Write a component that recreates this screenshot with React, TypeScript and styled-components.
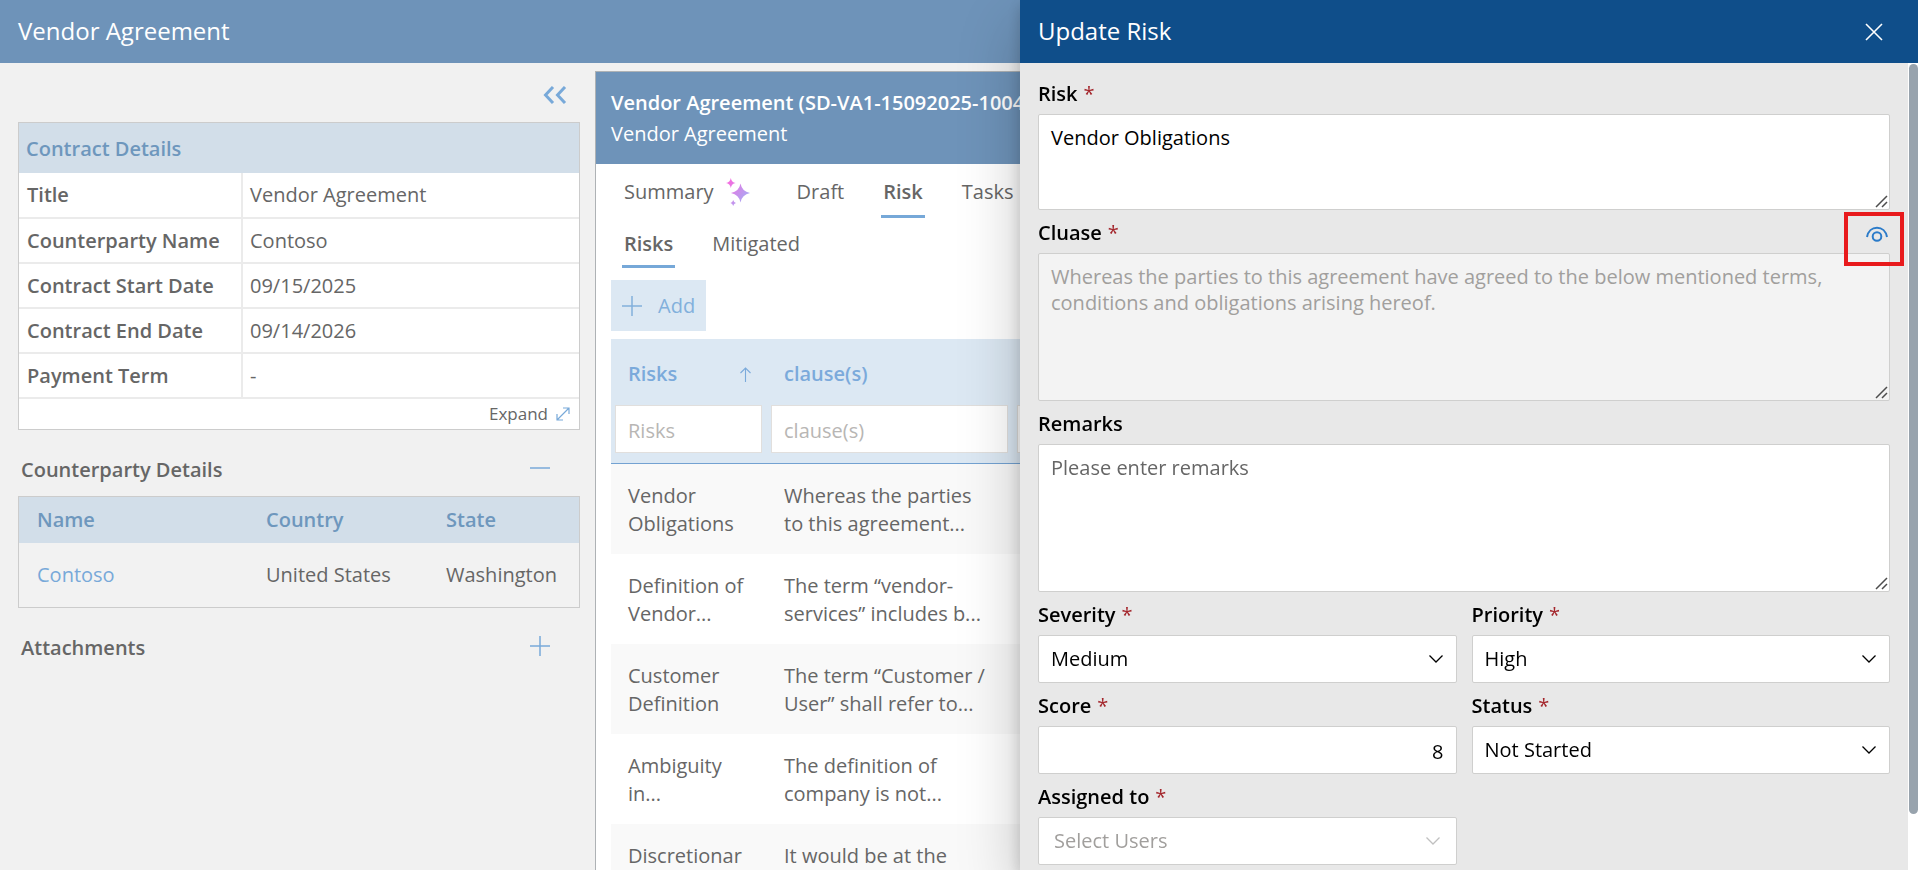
import React from "react";
import styled, { createGlobalStyle, css } from "styled-components";

const GlobalStyle = createGlobalStyle`
  *, *::before, *::after { box-sizing: border-box; }
  body {
    margin: 0;
    font-family: "Open Sans", "Noto Sans", sans-serif;
    font-size: 20px;
    line-height: 28px;
    color: #666;
    background: #f1f1f1;
  }
  button, input, select, textarea { font: inherit; }
  h1, h2, h3, p { margin: 0; font-size: inherit; font-weight: inherit; }
`;

const Page = styled.div`
  display: flex;
  flex-direction: column;
  height: 100vh;
  overflow: hidden;
`;

const TopBar = styled.header`
  flex: 0 0 63px;
  display: flex;
  align-items: center;
  padding: 0 18px 2px;
  background: #6e93b9;
  color: #fff;
  font-size: 24px;
`;

const Content = styled.div`
  flex: 1;
  min-height: 0;
  display: grid;
  grid-template-columns: 595px minmax(0, 1fr);
`;

const Sidebar = styled.aside`
  padding: 0 15px 0 18px;
`;

const IconButton = styled.button<{ $color?: string }>`
  display: flex;
  align-items: center;
  justify-content: center;
  padding: 0;
  border: 0;
  background: none;
  color: ${(p) => p.$color ?? "#78a9d9"};
  cursor: pointer;
`;

const SidebarTools = styled.div`
  display: flex;
  justify-content: flex-end;
  align-items: center;
  height: 59px;
  padding: 4px 13px 0 0;
`;

const Card = styled.section<{ $plain?: boolean }>`
  border: 1px solid #ccc;
  background: ${(p) => (p.$plain ? "#f2f2f2" : "#fff")};
`;

const CardTitle = styled.h2`
  height: 50px;
  padding: 2px 7px 0;
  display: flex;
  align-items: center;
  background: #d2dee9;
  color: #6e97bd;
  font-weight: 600;
`;

const DetailsTable = styled.table`
  width: 100%;
  border-collapse: collapse;
  table-layout: fixed;

  th,
  td {
    height: 45px;
    padding: 0 7px;
    text-align: left;
    border-bottom: 2px solid #ebebeb;
  }
  th {
    width: 223px;
    padding-left: 8px;
    font-weight: 600;
    border-right: 2px solid #ebebeb;
  }
`;

const CardFooter = styled.div`
  display: flex;
  justify-content: flex-end;
  align-items: center;
  height: 30px;
  padding: 0 9px;
`;

const ExpandButton = styled.button`
  display: flex;
  align-items: center;
  gap: 8px;
  padding: 0;
  border: 0;
  background: none;
  color: #666;
  font-size: 17px;
  cursor: pointer;
`;

const SectionRow = styled.div`
  display: flex;
  justify-content: space-between;
  align-items: center;
  height: 66px;
  padding: 14px 30px 0 3px;
  font-weight: 600;

  button {
    padding-bottom: 4px;
  }
`;

const PartyTable = styled.table`
  width: 100%;
  border-collapse: collapse;
  table-layout: fixed;

  th,
  td {
    padding: 0 0 0 18px;
    text-align: left;
    white-space: nowrap;
  }
  th {
    height: 46px;
    background: #d2dee9;
    color: #6e97bd;
    font-weight: 600;
  }
  td {
    height: 64px;
  }
  th:nth-child(1) {
    width: 229px;
  }
  th:nth-child(2) {
    width: 180px;
  }
`;

const PartyLink = styled.a`
  color: #78a9d9;
  text-decoration: none;
`;

const Panel = styled.main`
  margin-top: 8px;
  min-width: 0;
  border: 1px solid #aeb2b5;
  border-bottom: 0;
  background: #fff;
  overflow: hidden;
`;

const PanelHead = styled.div`
  height: 92px;
  padding: 15px;
  background: #6e93b9;
  color: #fff;
  line-height: 31px;
  white-space: nowrap;
`;

const Strong = styled.h2`
  font-weight: 600;
`;

const PanelBody = styled.div`
  padding: 0 15px;
`;

const TabRow = styled.div<{ $first?: boolean }>`
  display: flex;
  gap: 35px;
  height: ${(p) => (p.$first ? "54px" : "50px")};
  padding-left: 11px;
`;

const Tab = styled.button<{ $active?: boolean }>`
  display: flex;
  align-items: center;
  gap: 12px;
  height: 100%;
  padding: 5px 2px 0;
  border: 0;
  background: none;
  color: #666;
  cursor: pointer;
  border-bottom: 3px solid ${(p) => (p.$active ? "#76a8d8" : "transparent")};
  font-weight: ${(p) => (p.$active ? 600 : 400)};

  svg {
    margin-right: 8px;
  }
`;

const AddButton = styled.button`
  display: flex;
  align-items: center;
  gap: 16px;
  height: 51px;
  margin: 12px 0 8px;
  padding: 0 11px;
  border: 0;
  background: #dce8f3;
  color: #82b0dc;
  cursor: pointer;
`;

const RiskTable = styled.table`
  width: 100%;
  border-collapse: collapse;
  table-layout: fixed;

  col:nth-child(1) {
    width: 156px;
  }
  col:nth-child(2) {
    width: 246px;
  }
  thead {
    background: #dce8f3;
    border-bottom: 1px solid #73a2d2;
  }
  thead th {
    padding: 0;
    text-align: left;
    color: #7baadb;
    font-weight: 600;
  }
  tbody td {
    height: 90px;
    padding: 3px 0 0 17px;
    white-space: pre-line;
  }
  tbody tr:nth-child(odd) {
    background: #f9f9f9;
  }
`;

const ColumnHead = styled.div`
  display: flex;
  justify-content: space-between;
  align-items: center;
  height: 66px;
  padding: 4px 16px 0 17px;
`;

const FilterCell = styled.td`
  height: 58px;
  padding: 0 5px 10px 4px;
`;

const FilterInput = styled.input`
  display: block;
  width: 100%;
  height: 48px;
  padding: 2px 12px 0;
  border: 1px solid #e1dfdd;
  background: #fff;
  &::placeholder {
    color: #b8b6b4;
    opacity: 1;
  }
`;

const Drawer = styled.section`
  position: fixed;
  inset: 0 0 0 auto;
  width: 898px;
  max-width: 100%;
  display: flex;
  flex-direction: column;
  background: #e8e8e8;
  color: #000;
  box-shadow: 0 26px 58px rgba(0, 0, 0, 0.22), 0 5px 14px rgba(0, 0, 0, 0.18);
`;

const DrawerHead = styled.header`
  flex: 0 0 63px;
  display: flex;
  align-items: center;
  justify-content: space-between;
  padding: 0 35px 0 18px;
  background: #0f4e8a;
  color: #fff;
  font-size: 24px;

  h2 {
    padding-bottom: 2px;
  }
`;

const DrawerBody = styled.div`
  flex: 1;
  min-height: 0;
  display: flex;
`;

const Form = styled.form`
  flex: 1;
  min-width: 0;
  padding: 8px 18px;
  overflow: hidden auto;
  scrollbar-width: none;
`;

const ScrollTrack = styled.div`
  flex: 0 0 10px;
  padding: 1px 0 0 1px;
  background: #fff;
`;

const ScrollThumb = styled.div`
  height: 93%;
  border-radius: 5px;
  background: #98a3ad;
`;

const FieldGrid = styled.div`
  display: grid;
  grid-template-columns: 1fr 1fr;
  column-gap: 15px;
`;

const Field = styled.div<{ $wide?: boolean }>`
  min-width: 0;
  ${(p) => p.$wide && "grid-column: 1 / -1;"}
`;

const LabelRow = styled.div`
  position: relative;
  display: flex;
  justify-content: space-between;
  align-items: center;
  height: 43px;
  padding: 3px 2px 0 0;
`;

const Label = styled.label`
  font-weight: 600;
`;

const Required = styled.span`
  margin-left: 6px;
  color: #a4262c;
  font-weight: 400;
`;

const Highlight = styled.span`
  position: absolute;
  z-index: 1;
  top: 2px;
  right: -14px;
  width: 60px;
  height: 54px;
  border: 4px solid #e81a1c;
  pointer-events: none;
`;

const control = css`
  display: block;
  width: 100%;
  border: 1px solid #cfcfce;
  border-radius: 2px;
  background: #fff;
  color: #000;
`;

const TextAreaWrap = styled.div`
  display: grid;

  > * {
    grid-area: 1 / 1;
  }
  svg {
    place-self: end;
    margin: 0 2px 2px 0;
    pointer-events: none;
  }
`;

const TextArea = styled.textarea<{ $short?: boolean }>`
  ${control}
  height: ${(p) => (p.$short ? "96px" : "148px")};
  padding: 10px 12px;
  line-height: 26px;
  resize: vertical;
  &::-webkit-resizer {
    background: transparent;
  }
  &::placeholder {
    color: #666;
    opacity: 1;
  }
  &:disabled {
    background: #f3f3f3;
    color: #a19f9d;
  }
`;

const NumberInput = styled.input`
  ${control}
  height: 48px;
  padding: 2px 12px 0;
  text-align: right;
`;

const SelectWrap = styled.div<{ $muted?: boolean }>`
  display: grid;
  align-items: center;
  color: ${(p) => (p.$muted ? "#c0c0c0" : "#000")};

  > * {
    grid-area: 1 / 1;
  }
  svg {
    justify-self: end;
    margin-right: ${(p) => (p.$muted ? "16px" : "14px")};
    pointer-events: none;
  }
`;

const Select = styled.select<{ $muted?: boolean }>`
  ${control}
  height: 48px;
  padding: 0 ${(p) => (p.$muted ? "15px" : "12px")};
  appearance: none;
  ${(p) => p.$muted && "color: #a19f9d;"}
`;

const CollapseIcon = () => (
  <svg width="24" height="18" viewBox="0 0 24 18" fill="none" stroke="currentColor" strokeWidth="3">
    <path d="M10 1 2.500 9l7.500 8M22 1 14.500 9l7.500 8" />
  </svg>
);

const ExpandIcon = () => (
  <svg width="14" height="14" viewBox="0 0 14 14" fill="none" stroke="#78a9d9" strokeWidth="1.2">
    <path d="M1 13 13 1M7 1h6v6M1 7v6h6" />
  </svg>
);

const PlusIcon = ({ minus }: { minus?: boolean }) => (
  <svg width="20" height="20" viewBox="0 0 20 20" fill="none" stroke="currentColor" strokeWidth="1.5">
    <path d={minus ? "M0 10h20" : "M0 10h20M10 0v20"} />
  </svg>
);

const SparkleIcon = () => (
  <svg width="24" height="28" viewBox="0 0 24 28">
    <defs>
      <linearGradient id="sparkle" gradientUnits="userSpaceOnUse" x1="2" y1="4" x2="24" y2="20">
        <stop offset="0" stopColor="#f56be0" />
        <stop offset="1" stopColor="#a3aef5" />
      </linearGradient>
    </defs>
    <g fill="url(#sparkle)">
      <path d="M14.5 5.500Q16 13.500 24 15 16 16.500 14.500 24.500 13 16.500 5 15 13 13.500 14.500 5.500Z" />
      <path d="M4.800 0Q5.600 4.400 9.600 5 5.600 5.600 4.800 10 4 5.600 0 5 4 4.400 4.800 0Z" />
      <path d="M7.200 22Q7.800 24.500 10 25 7.800 25.500 7.200 28 6.600 25.500 4.500 25 6.600 24.500 7.200 22Z" />
    </g>
  </svg>
);

const SortIcon = () => (
  <svg width="11" height="15" viewBox="0 0 11 15" fill="none" stroke="currentColor" strokeWidth="1.100">
    <path d="M5.500 15V1M.5 6l5-5 5 5" />
  </svg>
);

const CloseIcon = () => (
  <svg width="18" height="18" viewBox="0 0 18 18" fill="none" stroke="currentColor" strokeWidth="1.600">
    <path d="m1 1 16 16M17 1 1 17" />
  </svg>
);

const EyeIcon = () => (
  <svg width="22" height="18" viewBox="0 0 22 18" fill="none" stroke="currentColor" strokeWidth="2">
    <path d="M1 13C2 7.300 6 3.700 11 3.700S20 7.300 21 13" />
    <circle cx="11" cy="12.500" r="4.300" />
  </svg>
);

const GripIcon = () => (
  <svg width="13" height="13" viewBox="0 0 13 13" fill="none" stroke="#4d4d4d" strokeWidth="1.500">
    <path d="M1 12 12 1M7 12l5-5" />
  </svg>
);

const ChevronIcon = ({ size = 14 }: { size?: number }) => (
  <svg width={size} height="8" viewBox="0 0 14 8" fill="none" stroke="currentColor" strokeWidth="1.300">
    <path d="m.5.500 6.500 6.500 6.500-6.500" />
  </svg>
);

const details: [string, string][] = [
  ["Title", "Vendor Agreement"],
  ["Counterparty Name", "Contoso"],
  ["Contract Start Date", "09/15/2025"],
  ["Contract End Date", "09/14/2026"],
  ["Payment Term", "-"],
];

const risks: [string, string][] = [
  ["Vendor\nObligations", "Whereas the parties\nto this agreement..."],
  ["Definition of\nVendor...", "The term “vendor-\nservices” includes b..."],
  ["Customer\nDefinition", "The term “Customer /\nUser” shall refer to..."],
  ["Ambiguity\nin...", "The definition of\ncompany is not..."],
  ["Discretionar\ny Power", "It would be at the\nsole discretion..."],
];

interface FieldLabelProps {
  htmlFor: string;
  text: string;
  required?: boolean;
  children?: React.ReactNode;
}

const FieldLabel = ({ htmlFor, text, required, children }: FieldLabelProps) => (
  <LabelRow>
    <Label htmlFor={htmlFor}>
      {text}
      {required && <Required>*</Required>}
    </Label>
    {children}
  </LabelRow>
);

interface SelectFieldProps {
  id: string;
  label: string;
  options: string[];
  muted?: boolean;
}

const SelectField = ({ id, label, options, muted }: SelectFieldProps) => (
  <Field>
    <FieldLabel htmlFor={id} text={label} required />
    <SelectWrap $muted={muted}>
      <Select id={id} $muted={muted}>
        {options.map((o) => (
          <option key={o}>{o}</option>
        ))}
      </Select>
      <ChevronIcon size={muted ? 16 : 14} />
    </SelectWrap>
  </Field>
);

export default function App() {
  return (
    <Page>
      <GlobalStyle />
      <TopBar>
        <h1>Vendor Agreement</h1>
      </TopBar>
      <Content>
        <Sidebar>
          <SidebarTools>
            <IconButton aria-label="Collapse panel">
              <CollapseIcon />
            </IconButton>
          </SidebarTools>
          <Card>
            <CardTitle>Contract Details</CardTitle>
            <DetailsTable>
              <tbody>
                {details.map(([name, value]) => (
                  <tr key={name}>
                    <th scope="row">{name}</th>
                    <td>{value}</td>
                  </tr>
                ))}
              </tbody>
            </DetailsTable>
            <CardFooter>
              <ExpandButton>
                Expand <ExpandIcon />
              </ExpandButton>
            </CardFooter>
          </Card>
          <SectionRow>
            <h2>Counterparty Details</h2>
            <IconButton aria-label="Hide counterparty details">
              <PlusIcon minus />
            </IconButton>
          </SectionRow>
          <Card $plain>
            <PartyTable>
              <thead>
                <tr>
                  <th>Name</th>
                  <th>Country</th>
                  <th>State</th>
                </tr>
              </thead>
              <tbody>
                <tr>
                  <td>
                    <PartyLink href="#contoso">Contoso</PartyLink>
                  </td>
                  <td>United States</td>
                  <td>Washington</td>
                </tr>
              </tbody>
            </PartyTable>
          </Card>
          <SectionRow>
            <h2>Attachments</h2>
            <IconButton aria-label="Show attachments">
              <PlusIcon />
            </IconButton>
          </SectionRow>
        </Sidebar>
        <Panel>
          <PanelHead>
            <Strong>Vendor Agreement (SD-VA1-15092025-1004)</Strong>
            <p>Vendor Agreement</p>
          </PanelHead>
          <PanelBody>
            <TabRow $first>
              <Tab>
                Summary <SparkleIcon />
              </Tab>
              <Tab>Draft</Tab>
              <Tab $active>Risk</Tab>
              <Tab>Tasks</Tab>
            </TabRow>
            <TabRow>
              <Tab $active>Risks</Tab>
              <Tab>Mitigated</Tab>
            </TabRow>
            <AddButton>
              <PlusIcon />
              Add
            </AddButton>
            <RiskTable>
              <colgroup>
                <col />
                <col />
                <col />
              </colgroup>
              <thead>
                <tr>
                  <th>
                    <ColumnHead>
                      Risks <SortIcon />
                    </ColumnHead>
                  </th>
                  <th>
                    <ColumnHead>clause(s)</ColumnHead>
                  </th>
                  <th />
                </tr>
                <tr>
                  <FilterCell>
                    <FilterInput placeholder="Risks" aria-label="Filter risks" />
                  </FilterCell>
                  <FilterCell>
                    <FilterInput placeholder="clause(s)" aria-label="Filter clauses" />
                  </FilterCell>
                  <FilterCell>
                    <FilterInput aria-label="Filter remarks" />
                  </FilterCell>
                </tr>
              </thead>
              <tbody>
                {risks.map(([risk, clause]) => (
                  <tr key={risk}>
                    <td>{risk}</td>
                    <td>{clause}</td>
                    <td />
                  </tr>
                ))}
              </tbody>
            </RiskTable>
          </PanelBody>
        </Panel>
      </Content>

      <Drawer role="dialog" aria-labelledby="drawer-title">
        <DrawerHead>
          <h2 id="drawer-title">Update Risk</h2>
          <IconButton $color="#fff" aria-label="Close">
            <CloseIcon />
          </IconButton>
        </DrawerHead>
        <DrawerBody>
          <Form>
            <FieldGrid>
              <Field $wide>
                <FieldLabel htmlFor="risk" text="Risk" required />
                <TextAreaWrap>
                  <TextArea id="risk" $short defaultValue="Vendor Obligations" />
                  <GripIcon />
                </TextAreaWrap>
              </Field>
              <Field $wide>
                <FieldLabel htmlFor="clause" text="Cluase" required>
                  <IconButton type="button" $color="#2b7bc9" aria-label="View clause">
                    <EyeIcon />
                  </IconButton>
                  <Highlight />
                </FieldLabel>
                <TextAreaWrap>
                  <TextArea
                    id="clause"
                    disabled
                    defaultValue="Whereas the parties to this agreement have agreed to the below mentioned terms, conditions and obligations arising hereof."
                  />
                  <GripIcon />
                </TextAreaWrap>
              </Field>
              <Field $wide>
                <FieldLabel htmlFor="remarks" text="Remarks" />
                <TextAreaWrap>
                  <TextArea id="remarks" placeholder="Please enter remarks" />
                  <GripIcon />
                </TextAreaWrap>
              </Field>
              <SelectField id="severity" label="Severity" options={["Medium", "Low", "High"]} />
              <SelectField id="priority" label="Priority" options={["High", "Medium", "Low"]} />
              <Field>
                <FieldLabel htmlFor="score" text="Score" required />
                <NumberInput id="score" inputMode="numeric" defaultValue="8" />
              </Field>
              <SelectField id="status" label="Status" options={["Not Started", "In Progress", "Completed"]} />
              <SelectField id="assigned" label="Assigned to" options={["Select Users"]} muted />
            </FieldGrid>
          </Form>
          <ScrollTrack aria-hidden="true">
            <ScrollThumb />
          </ScrollTrack>
        </DrawerBody>
      </Drawer>
    </Page>
  );
}
